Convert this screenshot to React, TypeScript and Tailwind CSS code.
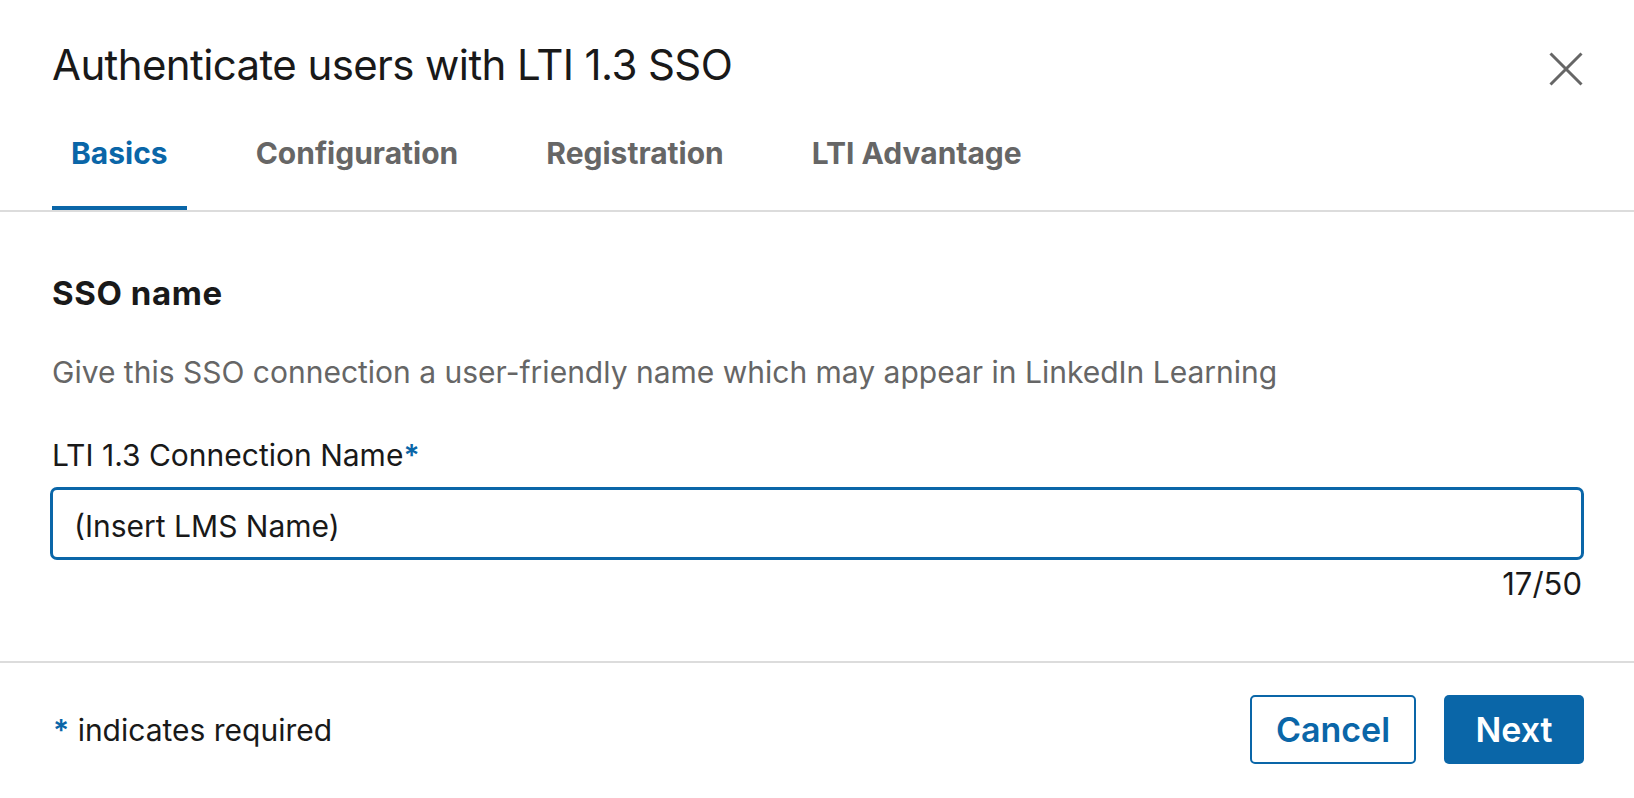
const BLUE = "#0a66a8";

const tabs = ["Basics", "Configuration", "Registration", "LTI Advantage"];

function CloseIcon() {
  return (
    <svg width="34" height="34" viewBox="0 0 34 34" fill="none">
      <path d="M1.5 1.5 L32.5 32.5 M32.5 1.5 L1.5 32.5" stroke="#666666" strokeWidth="3" />
    </svg>
  );
}

export default function App() {
  const active = 0;
  const name = "(Insert LMS Name)";

  return (
    <div className="min-h-[798px] bg-white font-[family-name:Inter,sans-serif] text-[#191919]">
      {/* header */}
      <div className="flex items-start justify-between pl-[52px] pr-[51px] pt-[39px]">
        <h1 className="text-[42px] leading-[52px] font-normal tracking-[-0.6px]">
          Authenticate users with LTI 1.3 SSO
        </h1>
        <button className="mt-[13px]" aria-label="Close">
          <CloseIcon />
        </button>
      </div>

      {/* tabs */}
      <nav className="mt-[44px] flex gap-[50px] border-b-2 border-[#dcdcdc] px-[52px]">
        {tabs.map((t, i) => (
          <div
            key={t}
            className={
              i === active
                ? "border-b-4 border-[#0a66a8] px-[19px] pb-[35px] text-[30px] leading-[36px] font-bold text-[#0a66a8]"
                : "border-b-4 border-transparent px-[19px] pb-[35px] text-[30px] leading-[36px] font-bold text-[#666666]"
            }
          >
            {t}
          </div>
        ))}
      </nav>

      {/* body */}
      <div className="px-[50px] pt-[61px] pb-[59px]">
        <h2 className="pl-[2px] text-[33px] leading-[40px] font-bold tracking-[0.6px]">SSO name</h2>
        <p className="mt-[39px] pl-[2px] text-[30px] leading-[40px] text-[#666666]">
          Give this SSO connection a user-friendly name which may appear in LinkedIn Learning
        </p>
        <label className="mt-[43px] block pl-[2px] text-[30px] leading-[40px]">
          LTI 1.3 Connection Name
          <span className="font-semibold" style={{ color: BLUE }}>*</span>
        </label>
        <input
          readOnly
          value={name}
          className="mt-[12px] block h-[73px] w-full rounded-[7px] border-[3px] border-[#0a66a8] pt-[5px] pl-[21px] text-[30px] text-[#191919] outline-none"
        />
        <div className="mt-[6px] pr-[2px] text-right text-[31px] leading-[36px]">
          {name.length}/50
        </div>
      </div>

      {/* footer */}
      <div className="flex items-center justify-between border-t-2 border-[#dcdcdc] px-[50px] pt-[32px] pb-[34px]">
        <div className="pl-[3px] text-[30px] leading-[40px]">
          <span className="font-semibold text-[#0a66a8]">*</span> indicates required
        </div>
        <div className="flex gap-[28px]">
          <button className="h-[69px] w-[166px] rounded-[5px] border-2 border-[#0a66a8] bg-white text-[34px] font-semibold text-[#0a66a8]">
            Cancel
          </button>
          <button className="h-[69px] w-[140px] rounded-[5px] bg-[#0a66a8] text-[34px] font-semibold text-white">
            Next
          </button>
        </div>
      </div>
    </div>
  );
}
